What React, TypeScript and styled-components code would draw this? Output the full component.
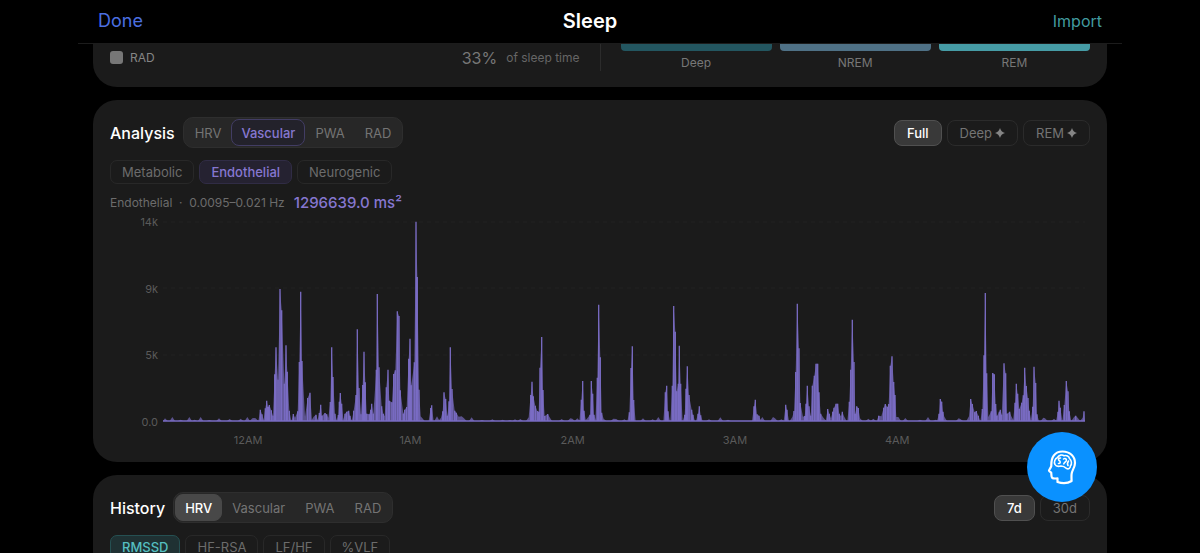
import React from "react";
import styled, { createGlobalStyle, css } from "styled-components";

const GlobalStyle = createGlobalStyle`
  * { box-sizing: border-box; }
  body {
    margin: 0;
    background: #000;
    color: #fff;
    font-family: Inter, "Liberation Sans", sans-serif;
  }
  button { font-family: inherit; margin: 0; cursor: pointer; }
`;

const purple = "#8677d0";

const Screen = styled.div`
  height: 100vh;
  overflow: hidden;
  background: #000;
`;

const TopBar = styled.header`
  display: grid;
  grid-template-columns: 1fr auto 1fr;
  align-items: center;
  height: 44px;
  margin: 0 78px;
  padding: 0 20px 2px;
  border-bottom: 1px solid #1c1c1c;
`;

const BarButton = styled.button<{ $color: string; $size: number; $end?: boolean }>`
  justify-self: ${(p) => (p.$end ? "end" : "start")};
  padding: 0;
  border: 0;
  background: none;
  color: ${(p) => p.$color};
  font-size: ${(p) => p.$size}px;
  line-height: 24px;
`;

const Title = styled.h1`
  margin: 0;
  padding-right: 20px;
  font-size: 20px;
  font-weight: 600;
  line-height: 24px;
`;

const Content = styled.main`
  display: flex;
  flex-direction: column;
  gap: 13px;
  padding: 0 93px;
`;

const Card = styled.section<{ $cut?: boolean }>`
  padding: ${(p) => (p.$cut ? "0 17px 16px" : "17px 17px 16px")};
  border-radius: ${(p) => (p.$cut ? "0 0 24px 24px" : "24px")};
  background: #1b1b1b;
`;

const Summary = styled.div`
  display: flex;
  gap: 20px;
  height: 27px;
`;

const Breakdown = styled.div`
  display: flex;
  flex: 1;
  align-items: center;
  color: #858585;
`;

const Swatch = styled.span`
  width: 13px;
  height: 13px;
  margin-right: 7px;
  border-radius: 3px;
  background: #777;
`;

const SmallText = styled.span<{ $color?: string }>`
  color: ${(p) => p.$color ?? "#858585"};
  font-size: 12px;
  line-height: 16px;
`;

const Percent = styled.span`
  margin: 0 9px 0 auto;
  color: #777;
  font-size: 16px;
  line-height: 20px;
`;

const Divider = styled.div`
  width: 1px;
  background: #2c2c2c;
`;

const Stages = styled.div`
  display: grid;
  flex: 1;
  grid-template-columns: repeat(3, 1fr);
  gap: 8px;
`;

const Stage = styled.div`
  display: flex;
  flex-direction: column;
  align-items: center;
  gap: 4px;
`;

const StageBar = styled.div<{ $color: string }>`
  flex: none;
  width: 100%;
  height: 7px;
  border-radius: 0 0 4px 4px;
  background: ${(p) => p.$color};
`;

const HeaderRow = styled.div`
  display: flex;
  align-items: center;
  gap: 8px;
  height: 31px;
`;

const Heading = styled.h2`
  margin: 0;
  font-size: 16px;
  font-weight: 500;
  line-height: 20px;
`;

const Segmented = styled.div`
  display: flex;
  height: 31px;
  padding: 1px;
  border: 1px solid #2e2e2e;
  border-radius: 10px;
  background: #272727;
`;

type Tone = "purple" | "gray";

const Segment = styled.button<{ $active?: Tone }>`
  padding: 0 9px;
  border: 1px solid transparent;
  border-radius: 8px;
  background: none;
  color: #747474;
  font-size: 13px;
  line-height: 16px;
  ${(p) =>
    p.$active === "purple" &&
    css`
      border-color: #423d64;
      background: #23222b;
      color: ${purple};
      font-weight: 500;
    `}
  ${(p) =>
    p.$active === "gray" &&
    css`
      border-color: #484848;
      background: #484848;
      color: #fff;
      font-weight: 500;
    `}
`;

const RangeGroup = styled.div`
  display: flex;
  gap: 5px;
  margin-left: auto;
`;

const RangeButton = styled.button<{ $active?: boolean }>`
  display: flex;
  align-items: center;
  gap: 3px;
  height: 26px;
  padding: 0 12px;
  border: 1px solid ${(p) => (p.$active ? "#505050" : "#2b2b2b")};
  border-radius: 8px;
  background: ${(p) => (p.$active ? "#393939" : "transparent")};
  color: ${(p) => (p.$active ? "#fff" : "#747474")};
  font-size: 13px;
  font-weight: ${(p) => (p.$active ? 500 : 400)};
  line-height: 16px;
`;

const Chips = styled.div`
  display: flex;
  gap: 5px;
  margin-top: 12px;
`;

const Chip = styled.button<{ $active?: "purple" | "teal" }>`
  height: 24px;
  padding: 0 11px;
  border: 1px solid #282828;
  border-radius: 7px;
  background: transparent;
  color: #6c6c6c;
  font-size: 13px;
  line-height: 16px;
  ${(p) =>
    p.$active === "purple" &&
    css`
      border-color: #302c45;
      background: #252231;
      color: ${purple};
      font-weight: 500;
    `}
  ${(p) =>
    p.$active === "teal" &&
    css`
      border-color: #255052;
      background: #1f3133;
      color: #55bfc0;
      font-weight: 500;
    `}
`;

const Reading = styled.div`
  display: flex;
  align-items: center;
  gap: 9px;
  height: 20px;
  margin-top: 9px;
`;

const Value = styled.strong`
  color: ${purple};
  font-size: 15px;
  font-weight: 500;
  line-height: 20px;
`;

const Chart = styled.figure`
  display: grid;
  grid-template-columns: 48px 1fr;
  column-gap: 5px;
  margin: 3px 5px 0 0;
`;

const YAxis = styled.div`
  display: flex;
  flex-direction: column;
  justify-content: space-between;
  align-items: flex-end;
  height: 212px;
`;

const Tick = styled.span`
  color: #5a5a5a;
  font-size: 11px;
  line-height: 12px;
  text-align: center;
`;

const Plot = styled.svg`
  display: block;
  width: 100%;
  height: 212px;
`;

const XAxis = styled.div`
  display: grid;
  grid-column: 2;
  grid-template-columns: repeat(5, 1fr);
  width: 88%;
  margin: 6px 0 0 4px;
`;

const Assistant = styled.button`
  position: fixed;
  right: 103px;
  bottom: 51px;
  display: flex;
  align-items: center;
  justify-content: center;
  width: 70px;
  height: 70px;
  padding: 0;
  border: 0;
  border-radius: 50%;
  background: #0a91ff;
`;

// Endothelial band power: [time, power] pairs, time in thirds of a chart unit.
const power: number[][] = [
  [6, 8], [28, 12], [53, 4], [79, 12], [95, 4], [113, 12], [139, 3], [168, 8], [200, 6], [233, 7], [253, 12], [268, 8], [273, 9], [278, 8],
  [292, 34], [297, 20], [307, 38], [311, 61], [315, 42], [319, 48], [325, 32], [330, 16], [335, 140], [339, 221], [345, 124], [351, 396], [356, 332], [364, 112], [369, 227], [373, 148], [379, 31],
  [391, 21], [396, 10], [404, 29], [409, 177], [413, 388], [417, 180], [426, 13], [434, 69], [441, 85], [452, 13], [459, 19], [469, 24], [473, 49], [477, 16], [486, 24], [491, 20], [496, 10],
  [502, 57], [506, 221], [510, 132], [516, 22], [526, 18], [529, 58], [532, 84], [536, 52], [546, 22], [551, 28], [557, 31], [561, 16], [572, 31], [579, 78], [583, 275], [588, 99], [594, 20], [599, 108], [603, 208], [607, 116], [611, 22],
  [619, 20], [623, 34], [626, 52], [631, 22], [640, 154], [643, 381], [648, 161], [656, 44], [661, 22], [665, 14], [670, 101], [675, 154], [679, 61], [687, 56], [692, 141], [697, 152], [703, 329], [708, 315], [712, 92],
  [721, 22], [725, 34], [731, 42], [737, 187], [741, 247], [745, 107], [754, 176], [759, 598], [763, 432], [768, 94], [773, 14], [777, 10], [803, 39], [806, 47], [822, 14], [834, 10], [839, 29], [843, 86], [848, 66], [853, 16], [858, 59], [862, 221], [867, 96],
  [875, 31], [880, 25], [887, 13], [896, 14], [903, 8], [926, 11], [957, 3], [988, 5], [1019, 4], [1041, 3], [1056, 5], [1072, 6], [1097, 11], [1103, 78], [1107, 118], [1111, 74], [1117, 46], [1123, 30], [1127, 28], [1131, 160], [1136, 252], [1140, 93], [1145, 15], [1154, 21], [1159, 13],
  [1196, 6], [1222, 8], [1228, 7], [1243, 8], [1255, 64], [1259, 120], [1263, 31], [1273, 8], [1281, 19], [1285, 120], [1289, 82], [1293, 19], [1303, 130], [1307, 349], [1312, 191], [1316, 25], [1322, 7], [1351, 7], [1360, 6], [1384, 5], [1399, 26], [1404, 159], [1408, 224], [1412, 63], [1440, 8],
  [1469, 5], [1486, 12], [1507, 86], [1511, 106], [1515, 29], [1528, 106], [1532, 345], [1537, 268], [1541, 89], [1546, 112], [1549, 226], [1553, 112], [1565, 19], [1569, 97], [1573, 164], [1578, 78], [1586, 34], [1590, 19], [1605, 22], [1609, 44], [1613, 17], [1638, 5], [1672, 11], [1695, 4],
  [1773, 44], [1777, 64], [1782, 20], [1788, 16], [1798, 12], [1830, 12], [1836, 8], [1855, 5], [1868, 49], [1872, 34], [1888, 12], [1893, 30], [1898, 147], [1903, 352], [1908, 218], [1912, 54], [1920, 13], [1925, 15], [1929, 52], [1933, 106], [1938, 44], [1943, 16], [1948, 106], [1954, 136], [1959, 172], [1964, 172], [1968, 86], [1973, 22],
  [1982, 9], [1994, 36], [1999, 22], [2004, 8], [2009, 28], [2013, 40], [2019, 52], [2024, 52], [2029, 22], [2034, 14], [2038, 28], [2043, 14], [2059, 58], [2063, 154], [2068, 304], [2073, 177], [2077, 22], [2081, 44], [2086, 39], [2091, 8],
  [2116, 7], [2131, 7], [2147, 16], [2155, 14], [2162, 40], [2167, 51], [2173, 42], [2177, 51], [2182, 166], [2187, 194], [2192, 117], [2196, 78], [2200, 12], [2206, 12], [2227, 9], [2271, 4], [2295, 12], [2318, 4], [2328, 22], [2332, 66], [2336, 58], [2340, 28], [2344, 13], [2387, 8], [2392, 6],
  [2418, 14], [2423, 66], [2428, 51], [2435, 26], [2440, 30], [2446, 16], [2458, 36], [2463, 197], [2467, 384], [2471, 143], [2476, 12], [2485, 29], [2489, 144], [2494, 140], [2498, 51], [2502, 16], [2509, 28], [2512, 34], [2516, 19], [2523, 173], [2528, 143], [2532, 22], [2540, 28], [2545, 14],
  [2556, 55], [2560, 112], [2564, 82], [2569, 36], [2576, 55], [2581, 77], [2585, 160], [2590, 105], [2595, 69], [2599, 31], [2609, 43], [2613, 163], [2618, 114], [2622, 20], [2641, 10], [2646, 8], [2673, 7], [2685, 28], [2688, 61], [2692, 40], [2704, 48], [2710, 120], [2715, 89], [2719, 29], [2733, 12], [2738, 16], [2744, 10], [2759, 10], [2763, 29],
];

const PLOT_BASE = 205;

const bars = power
  .filter(([, v]) => v > 14)
  .map(([t, v]) => `M${(t / 3).toFixed(1)} ${PLOT_BASE}V${(PLOT_BASE - v / 3).toFixed(1)}`)
  .join("");

// The tinted area returns to the baseline wherever samples are far apart;
// low ripples get a wider foot than spikes.
const area =
  power.reduce((path, [t, v], i) => {
    const before = i === 0 || t - power[i - 1][0] > 9;
    const after = i === power.length - 1 || power[i + 1][0] - t > 9;
    const y = PLOT_BASE - v / 3;
    const foot = v > 14 ? 6 : 8;
    const lead = before ? `L${Math.max(0, t - foot) / 3} ${PLOT_BASE}` : "";
    const tail = after ? `L${Math.min(2766, t + foot) / 3} ${PLOT_BASE}` : "";
    return `${path}${lead}L${t / 3} ${y}${tail}`;
  }, `M0 ${PLOT_BASE}`) + "Z";

const bands = ["HRV", "Vascular", "PWA", "RAD"];

function BandPicker({ active, tone }: { active: string; tone: Tone }) {
  return (
    <Segmented>
      {bands.map((band) => (
        <Segment key={band} type="button" $active={band === active ? tone : undefined}>
          {band}
        </Segment>
      ))}
    </Segmented>
  );
}

function Sparkle() {
  return (
    <svg width="10" height="10" viewBox="0 0 12 12" fill="#858585" aria-hidden="true">
      <path d="M6 0C7 3.400 8.600 5 12 6C8.600 7 7 8.600 6 12C5 8.600 3.400 7 0 6C3.400 5 5 3.400 6 0Z" />
    </svg>
  );
}

function HeadIcon() {
  return (
    <svg width="30" height="36" viewBox="0 0 30 36" fill="none" stroke="#fff" strokeLinecap="round" strokeLinejoin="round" aria-hidden="true">
      <path
        strokeWidth="2.2"
        d="M10.500 33V29.400C8.500 29.400 6.600 30 5.200 28.800C4 27.800 4.600 25.500 4.200 23.700C3.300 23 2 22.400 2 21.500C2.200 20.300 4 18.600 4.300 17C4 8 7.800 2.500 15.500 2.500C23 2.500 28 7.500 28 14C28 18.500 25 21 24.600 25C24.300 28 24.600 30.500 24.600 32C21 34.300 15 34.600 10.500 33"
      />
      <path
        strokeWidth="1.600"
        d="M8 15.500C6.600 13 8 9.500 10.500 8.500C12 5.800 15.500 5.500 17 6.800C19.500 5.800 22 7.500 22.500 9.500C24.800 11.500 25 15 23.500 16.800C23.500 19 21.500 20.600 19.800 19.600C18 18 16.500 17 14 17C11.500 17.700 9 17.500 8 15.500ZM13.500 9C11.500 9 11 10.500 12 11.500C13.800 12.200 13.500 14.500 11.500 14.500M16.500 10C18 8.800 20 10 19.200 11.800C18.500 13 17 13.500 16.800 14.800M21.500 12C20.500 13.500 20 15 21 16.500"
      />
    </svg>
  );
}

export default function App() {
  return (
    <Screen>
      <GlobalStyle />
      <TopBar>
        <BarButton type="button" $color="#4b6fe0" $size={18}>Done</BarButton>
        <Title>Sleep</Title>
        <BarButton type="button" $color="#429b9f" $size={16} $end>Import</BarButton>
      </TopBar>
      <Content>
        <Card $cut>
          <Summary>
            <Breakdown>
              <Swatch />
              <SmallText>RAD</SmallText>
              <Percent>33%</Percent>
              <SmallText $color="#666">of sleep time</SmallText>
            </Breakdown>
            <Divider />
            <Stages>
              <Stage><StageBar $color="#235660" /><SmallText $color="#777">Deep</SmallText></Stage>
              <Stage><StageBar $color="#4f7186" /><SmallText $color="#777">NREM</SmallText></Stage>
              <Stage><StageBar $color="#469ca6" /><SmallText $color="#777">REM</SmallText></Stage>
            </Stages>
          </Summary>
        </Card>

        <Card>
          <HeaderRow>
            <Heading>Analysis</Heading>
            <BandPicker active="Vascular" tone="purple" />
            <RangeGroup>
              <RangeButton type="button" $active>Full</RangeButton>
              <RangeButton type="button">Deep <Sparkle /></RangeButton>
              <RangeButton type="button">REM <Sparkle /></RangeButton>
            </RangeGroup>
          </HeaderRow>
          <Chips>
            <Chip type="button">Metabolic</Chip>
            <Chip type="button" $active="purple">Endothelial</Chip>
            <Chip type="button">Neurogenic</Chip>
          </Chips>
          <Reading>
            <SmallText $color="#6c6c6c">Endothelial &nbsp;·&nbsp; 0.0095–0.021 Hz</SmallText>
            <Value>1296639.0 ms²</Value>
          </Reading>
          <Chart>
            <YAxis>
              <Tick>14k</Tick>
              <Tick>9k</Tick>
              <Tick>5k</Tick>
              <Tick>0.0</Tick>
            </YAxis>
            <Plot viewBox="0 0 922 212" preserveAspectRatio="none" role="img" aria-label="Endothelial power overnight">
              <path d="M0 6H922M0 72H922M0 139H922" stroke="#232323" strokeDasharray="4 4" />
              <path d={area} fill="#7669bd" fillOpacity="0.7" />
              <path d={bars} stroke="#7a6cc4" strokeWidth="1.3" />
              <path d="M0 205H922" stroke="#7a6cc4" strokeWidth="1.3" />
            </Plot>
            <XAxis>
              <Tick>12AM</Tick>
              <Tick>1AM</Tick>
              <Tick>2AM</Tick>
              <Tick>3AM</Tick>
              <Tick>4AM</Tick>
            </XAxis>
          </Chart>
        </Card>

        <Card>
          <HeaderRow>
            <Heading>History</Heading>
            <BandPicker active="HRV" tone="gray" />
            <RangeGroup>
              <RangeButton type="button" $active>7d</RangeButton>
              <RangeButton type="button">30d</RangeButton>
            </RangeGroup>
          </HeaderRow>
          <Chips>
            <Chip type="button" $active="teal">RMSSD</Chip>
            <Chip type="button">HF-RSA</Chip>
            <Chip type="button">LF/HF</Chip>
            <Chip type="button">%VLF</Chip>
          </Chips>
        </Card>
      </Content>
      <Assistant type="button" aria-label="Open assistant">
        <HeadIcon />
      </Assistant>
    </Screen>
  );
}
